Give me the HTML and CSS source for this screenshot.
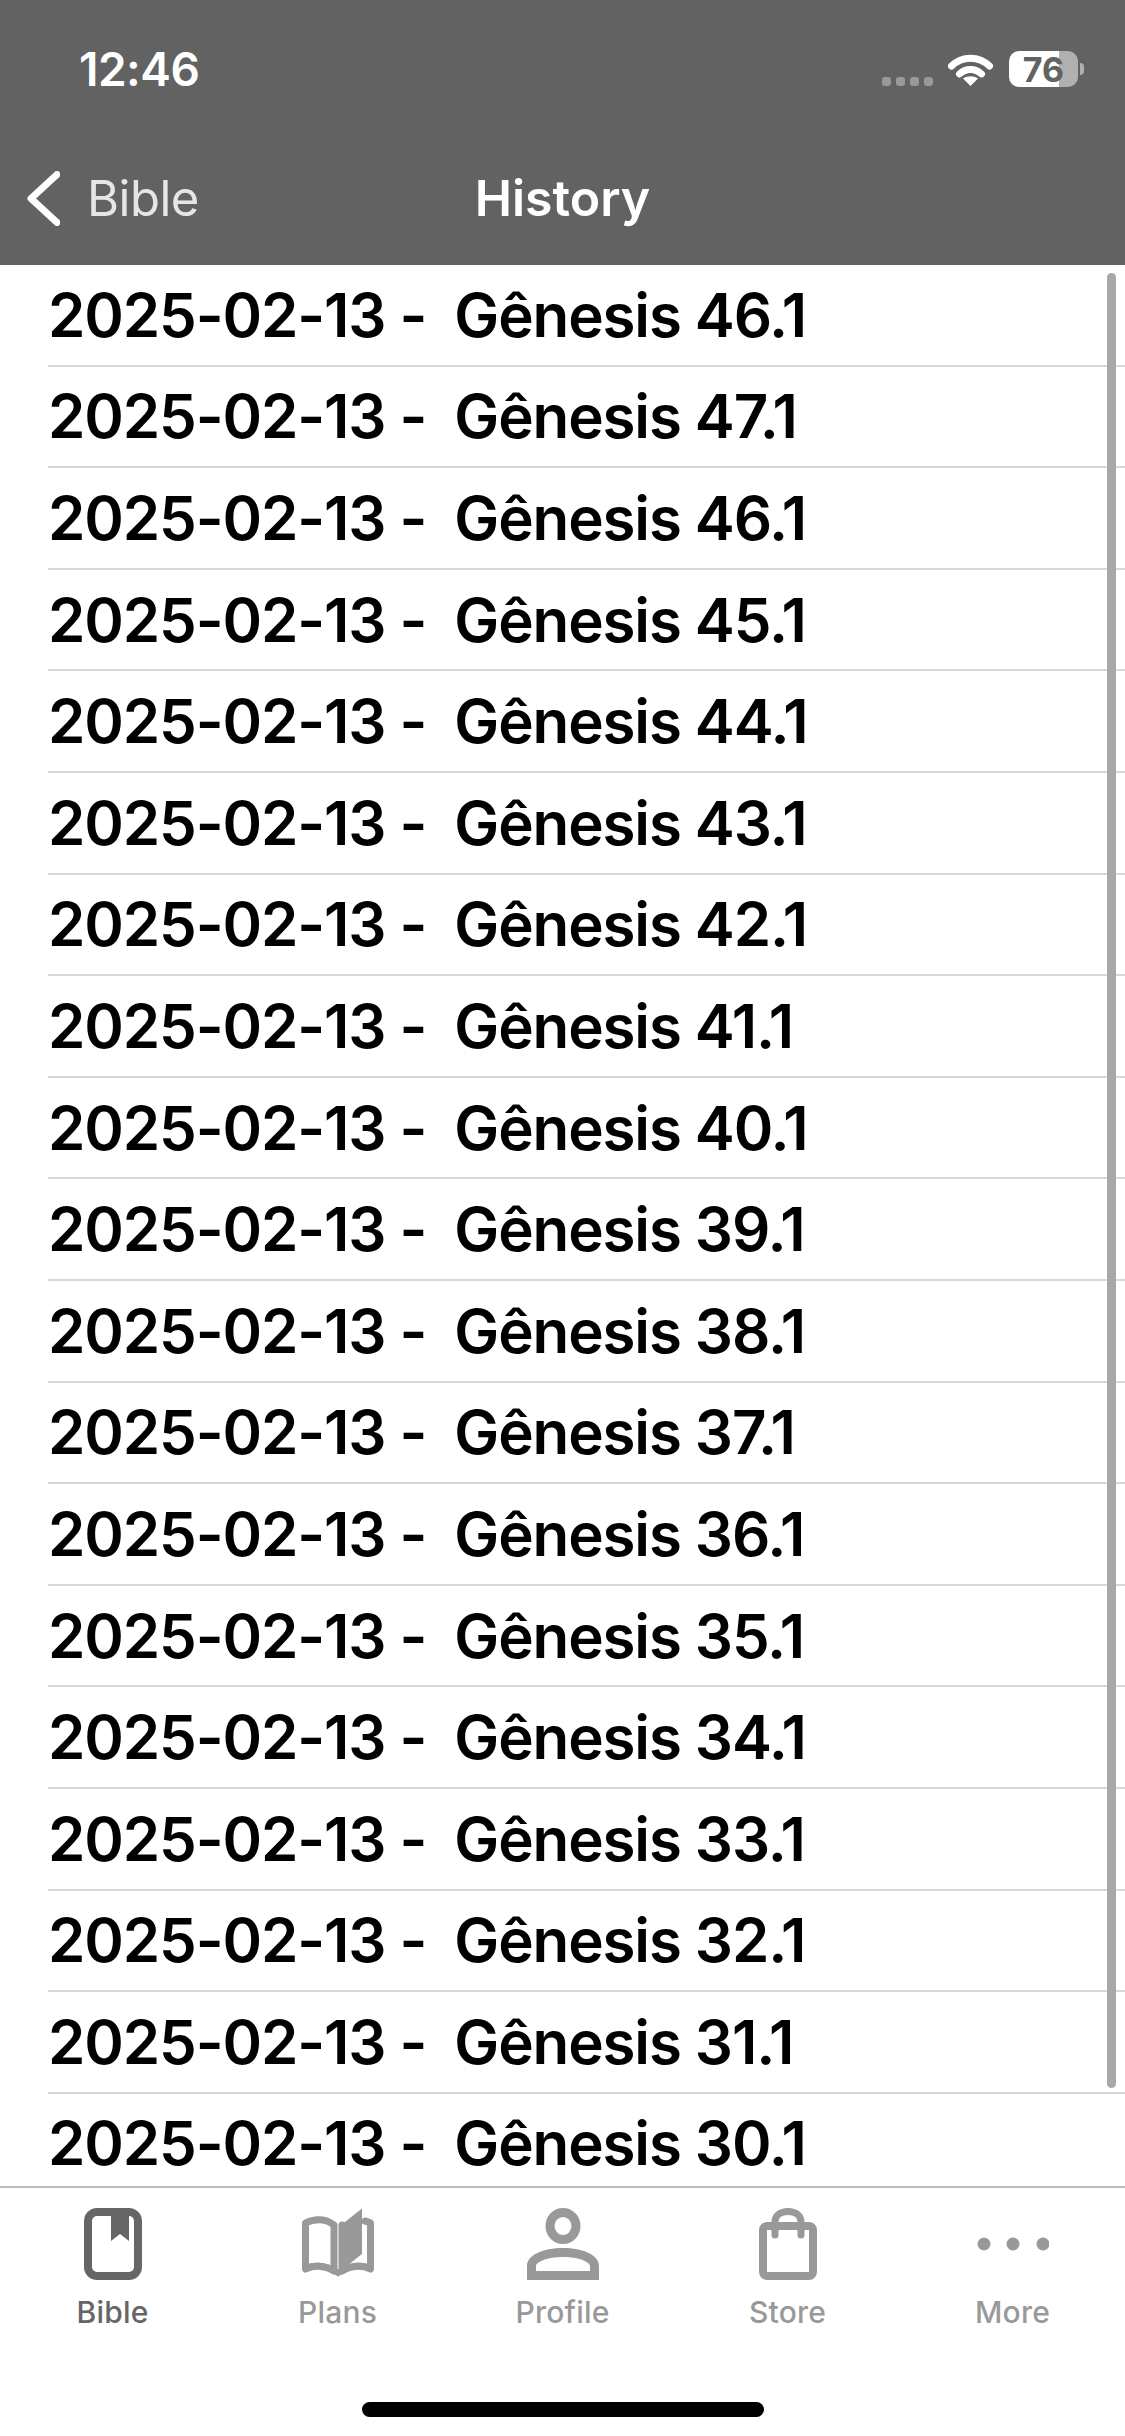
FILE: index.html
```html
<!DOCTYPE html>
<html lang="en">
<head>
    <title>History</title>
    <meta name="viewport" content="width=device-width, initial-scale=1.0" />
    <link rel="stylesheet" href="styles.css">
</head>

<body>
    <header class="top">
        <div class="status">
            <span class="time">12:46</span>
            <div class="status-right">
                <div class="signal"><i></i><i></i><i></i><i></i></div>
                <svg class="wifi" viewBox="0 0 45 33" width="45" height="33">
                    <path d="M3.500 13C14 2.500 31 2.500 41.500 13" fill="none" stroke="#fff" stroke-width="7" stroke-linecap="round"/>
                    <path d="M11.500 21C18 15 27 15 33.500 21" fill="none" stroke="#fff" stroke-width="7" stroke-linecap="round"/>
                    <path d="M22.500 33L15 25.500C19.500 22.500 25.500 22.500 30 25.500Z" fill="#fff"/>
                </svg>
                <div class="battery"><span>76</span></div>
                <div class="battery-tip"></div>
            </div>
        </div>
        <nav class="navbar">
            <div class="back">
                <svg viewBox="0 0 33 55" width="33" height="55">
                    <path d="M30 3.500L4 27.500L30 51.500" fill="none" stroke="#fff" stroke-width="7" stroke-linecap="round" stroke-linejoin="round"/>
                </svg>
                <span>Bible</span>
            </div>
            <h1>History</h1>
            <div></div>
        </nav>
    </header>

    <main class="list">
        <div class="row">2025-02-13 -  Gênesis 46.1</div>
        <div class="row">2025-02-13 -  Gênesis 47.1</div>
        <div class="row">2025-02-13 -  Gênesis 46.1</div>
        <div class="row">2025-02-13 -  Gênesis 45.1</div>
        <div class="row">2025-02-13 -  Gênesis 44.1</div>
        <div class="row">2025-02-13 -  Gênesis 43.1</div>
        <div class="row">2025-02-13 -  Gênesis 42.1</div>
        <div class="row">2025-02-13 -  Gênesis 41.1</div>
        <div class="row">2025-02-13 -  Gênesis 40.1</div>
        <div class="row">2025-02-13 -  Gênesis 39.1</div>
        <div class="row">2025-02-13 -  Gênesis 38.1</div>
        <div class="row">2025-02-13 -  Gênesis 37.1</div>
        <div class="row">2025-02-13 -  Gênesis 36.1</div>
        <div class="row">2025-02-13 -  Gênesis 35.1</div>
        <div class="row">2025-02-13 -  Gênesis 34.1</div>
        <div class="row">2025-02-13 -  Gênesis 33.1</div>
        <div class="row">2025-02-13 -  Gênesis 32.1</div>
        <div class="row">2025-02-13 -  Gênesis 31.1</div>
        <div class="row">2025-02-13 -  Gênesis 30.1</div>
        <div class="scrollbar"></div>
    </main>

    <footer class="tabs">
        <div class="tab-row">
            <div class="tab active">
                <svg viewBox="0 0 58 72" width="58" height="72">
                    <rect x="4" y="4" width="50" height="64" rx="9" fill="none" stroke="#666" stroke-width="8"/>
                    <path d="M27 4H45V33L36 26L27 33Z" fill="#666"/>
                </svg>
                <span>Bible</span>
            </div>
            <div class="tab">
                <svg viewBox="0 0 72 72" width="72" height="72">
                    <path d="M32 63C24 57.500 13 57 3.500 61V15C13 10 24 10.500 32 17Z M3 64" fill="none" stroke="#999" stroke-width="7" stroke-linejoin="round"/>
                    <path d="M40 17V63C48 57.500 59 57 68.500 61V15C67 14 65 13.500 63 13" fill="none" stroke="#999" stroke-width="7" stroke-linejoin="round" stroke-linecap="round"/>
                    <path d="M41 15.500L60 0.500V46L41 61Z" fill="#999"/>
                    <path d="M3 60C13 56 25 57 36 65C47 57 59 56 69 60" fill="none" stroke="#999" stroke-width="6" stroke-linecap="round"/>
                </svg>
                <span>Plans</span>
            </div>
            <div class="tab">
                <svg viewBox="0 0 72 72" width="72" height="72">
                    <ellipse cx="36" cy="18" rx="13" ry="13.500" fill="none" stroke="#999" stroke-width="9"/>
                    <path fill-rule="evenodd" d="M0 72V58C0 47 16 40 36 40C56 40 72 47 72 58V72Z M9 63H63V58C63 54 52 49 36 49C20 49 9 54 9 58Z" fill="#999"/>
                </svg>
                <span>Profile</span>
            </div>
            <div class="tab">
                <svg viewBox="0 0 58 72" width="58" height="72">
                    <rect x="4" y="18" width="50" height="50" rx="4" fill="none" stroke="#999" stroke-width="8"/>
                    <path d="M16 27V14C16 7.500 21.500 3.500 29 3.500C36.500 3.500 42 7.500 42 14V27" fill="none" stroke="#999" stroke-width="7" stroke-linecap="round"/>
                </svg>
                <span>Store</span>
            </div>
            <div class="tab">
                <svg viewBox="0 0 72 72" width="72" height="72">
                    <circle cx="7" cy="36" r="6.500" fill="#999"/>
                    <circle cx="36" cy="36" r="6.500" fill="#999"/>
                    <circle cx="66" cy="36" r="6.500" fill="#999"/>
                </svg>
                <span>More</span>
            </div>
        </div>
        <div class="home-bar"></div>
    </footer>
</body>

</html>
```

FILE: styles.css
```css
* {
    box-sizing: border-box;
}

body {
    display: flex;
    flex-direction: column;
    width: 1125px;
    height: 2436px;
    margin: 0;
    overflow: hidden;
    background: white;
    font-family: Inter, "Liberation Sans", sans-serif;
}

/* top bar */
.top {
    height: 265px;
    padding-bottom: 9px;
    background: #626262;
    color: white;
}

.status {
    display: flex;
    align-items: center;
    justify-content: space-between;
    height: 138px;
    padding: 0 41px 0 79px;
}

.time {
    font-size: 46px;
    font-weight: 600;
    letter-spacing: -0.5px;
}

.status-right {
    display: flex;
    align-items: center;
}

.signal {
    display: flex;
    gap: 5px;
    margin-top: 24px;
    margin-right: 15px;
}

.signal i {
    width: 9px;
    height: 9px;
    border-radius: 3px;
    background: #999;
}

.wifi {
    margin-right: 16px;
}

.battery {
    display: flex;
    align-items: center;
    justify-content: center;
    width: 69px;
    height: 36px;
    border-radius: 10px;
    background: linear-gradient(to right, white 50px, #b0b0b0 50px);
    color: #626262;
    font-size: 34px;
    font-weight: 700;
}

.battery-tip {
    width: 4px;
    height: 12px;
    margin-left: 2px;
    border-radius: 0 4px 4px 0;
    background: #b0b0b0;
}

.navbar {
    display: grid;
    grid-template-columns: 1fr auto 1fr;
    align-items: center;
    height: 118px;
    padding: 2px 27px 0;
}

.back {
    display: flex;
    align-items: center;
    gap: 27px;
    font-size: 49px;
    letter-spacing: -0.5px;
    color: #e6e6e6;
}

.navbar h1 {
    margin: 0;
    font-size: 50px;
    font-weight: 600;
}

/* history list */
.list {
    position: relative;
    flex: 1;
    overflow: hidden;
    padding-left: 48px;
}

.row {
    display: flex;
    align-items: center;
    height: 101.6px;
    border-bottom: 2px solid #d8d8d8;
    color: black;
    font-size: 60px;
    font-weight: 600;
    letter-spacing: -1.1px;
    white-space: pre;
}

.scrollbar {
    position: absolute;
    top: 8px;
    right: 9px;
    width: 9px;
    height: 1815px;
    border-radius: 5px;
    background: #a8a8a8;
}

/* bottom tabs */
.tabs {
    height: 250px;
    border-top: 2px solid #bbb;
}

.tab-row {
    display: grid;
    grid-template-columns: repeat(5, 1fr);
    padding-top: 20px;
}

.tab {
    display: flex;
    flex-direction: column;
    align-items: center;
    gap: 14px;
    color: #999;
    font-size: 30px;
    font-weight: 500;
    letter-spacing: 0.2px;
    line-height: 36px;
}

.tab.active {
    color: #666;
}

.home-bar {
    width: 402px;
    height: 15px;
    margin: 72px auto 0;
    border-radius: 8px;
    background: black;
}
```
